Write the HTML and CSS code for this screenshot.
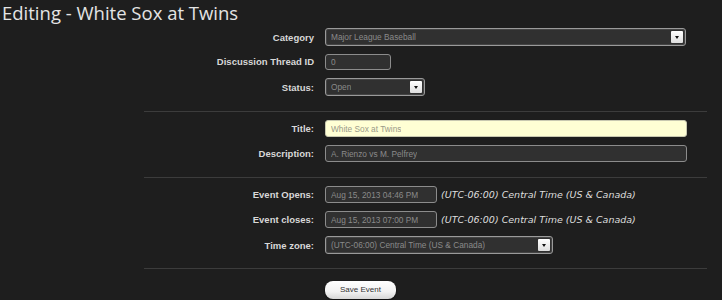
FILE: index.html
```html
<!DOCTYPE html>
<html>
<head>
<meta charset="utf-8">
<link rel="stylesheet" href="styles.css">
</head>
<body>
<h1 class="page-title">Editing - White Sox at Twins</h1>
<div class="form">
  <div class="section first">
    <div class="row">
      <label class="lbl">Category</label>
      <div class="select w-category"><span class="val">Major League Baseball</span><span class="arrow"></span></div>
    </div>
    <div class="row">
      <label class="lbl">Discussion Thread ID</label>
      <div class="input w-id short"><span class="val">0</span></div>
    </div>
    <div class="row">
      <label class="lbl">Status:</label>
      <div class="select w-status"><span class="val">Open</span><span class="arrow"></span></div>
    </div>
  </div>
  <div class="section">
    <div class="row">
      <label class="lbl">Title:</label>
      <div class="input w-full yellow"><span class="val">White Sox at Twins</span></div>
    </div>
    <div class="row">
      <label class="lbl">Description:</label>
      <div class="input w-full"><span class="val">A. Rienzo vs M. Pelfrey</span></div>
    </div>
  </div>
  <div class="section">
    <div class="row">
      <label class="lbl">Event Opens:</label>
      <div class="with-note">
        <div class="input w-date"><span class="val">Aug 15, 2013 04:46 PM</span></div>
        <span class="note">(UTC-06:00) Central Time (US &amp; Canada)</span>
      </div>
    </div>
    <div class="row">
      <label class="lbl">Event closes:</label>
      <div class="with-note">
        <div class="input w-date"><span class="val">Aug 15, 2013 07:00 PM</span></div>
        <span class="note">(UTC-06:00) Central Time (US &amp; Canada)</span>
      </div>
    </div>
    <div class="row">
      <label class="lbl">Time zone:</label>
      <div class="select w-tz"><span class="val">(UTC-06:00) Central Time (US &amp; Canada)</span><span class="arrow"></span></div>
    </div>
  </div>
  <div class="section actions">
    <button class="btn">Save Event</button>
  </div>
</div>
</body>
</html>
```

FILE: styles.css
```css
html, body {
  margin: 0;
  padding: 0;
  background: #1e1e1e;
  height: 100%;
}
body {
  font-family: "Liberation Sans", Arial, sans-serif;
  color: #dcdcdc;
}
.page-title {
  margin: 0;
  padding: 0 0 0 2px;
  font-family: "Open Sans", sans-serif;
  font-weight: 400;
  font-size: 18.5px;
  line-height: 25px;
  color: #e4e4e4;
}
.form {
  margin-left: 144px;
  width: 563px;
}
.section {
  border-top: 1px solid #3c3c3c;
  padding: 8px 0 7px;
}
.section.first {
  border-top: none;
  padding-top: 3px;
  padding-bottom: 8px;
}
.row {
  display: grid;
  grid-template-columns: 170px auto;
  column-gap: 11px;
  align-items: center;
  height: 17px;
  margin-bottom: 8px;
}
.lbl {
  text-align: right;
  font-weight: 700;
  font-size: 9.5px;
  color: #d8d8d8;
  white-space: nowrap;
}
.input, .select {
  box-sizing: border-box;
  height: 17px;
  border: 1px solid #8c8c8c;
  border-radius: 3px;
  background: #303030;
  display: flex;
  align-items: center;
  padding-left: 5px;
  position: relative;
}
.select {
  height: 18px;
  border-color: #9a9a9a;
  box-shadow: inset 0 0 0 1px #444;
}
.input.short {
  height: 16px;
}
.val {
  font-size: 8.3px;
  color: #8a8a8a;
  white-space: nowrap;
  overflow: hidden;
}
.yellow {
  background: #ffffd4;
  border-color: #c8c8b0;
}
.yellow .val {
  color: #9a9a88;
}
.w-category { width: 361px; }
.w-id { width: 66px; }
.w-status { width: 100px; }
.w-full { width: 362px; }
.w-date { width: 112px; }
.w-tz { width: 228px; }
.arrow {
  position: absolute;
  right: 2px;
  top: 2px;
  width: 12px;
  height: 12px;
  background: linear-gradient(#ffffff, #dedede);
  border-radius: 1px;
}
.arrow::after {
  content: "";
  position: absolute;
  left: 4px;
  top: 5px;
  border-left: 2.5px solid transparent;
  border-right: 2.5px solid transparent;
  border-top: 3px solid #111;
}
.with-note {
  display: flex;
  align-items: center;
  gap: 4px;
}
.note {
  font-family: "DejaVu Sans", sans-serif;
  font-style: italic;
  font-size: 9.5px;
  color: #dedede;
  white-space: nowrap;
}
.actions {
  padding-top: 9px;
  padding-left: 181px;
}
.btn {
  width: 71px;
  height: 18px;
  border: none;
  border-radius: 8px;
  background: linear-gradient(#ffffff, #f2f2f2 60%, #d6d6d6);
  box-shadow: 0 1px 2px rgba(0,0,0,0.6);
  font-family: "Liberation Sans", Arial, sans-serif;
  font-size: 8px;
  color: #333;
  padding: 0;
}
```
